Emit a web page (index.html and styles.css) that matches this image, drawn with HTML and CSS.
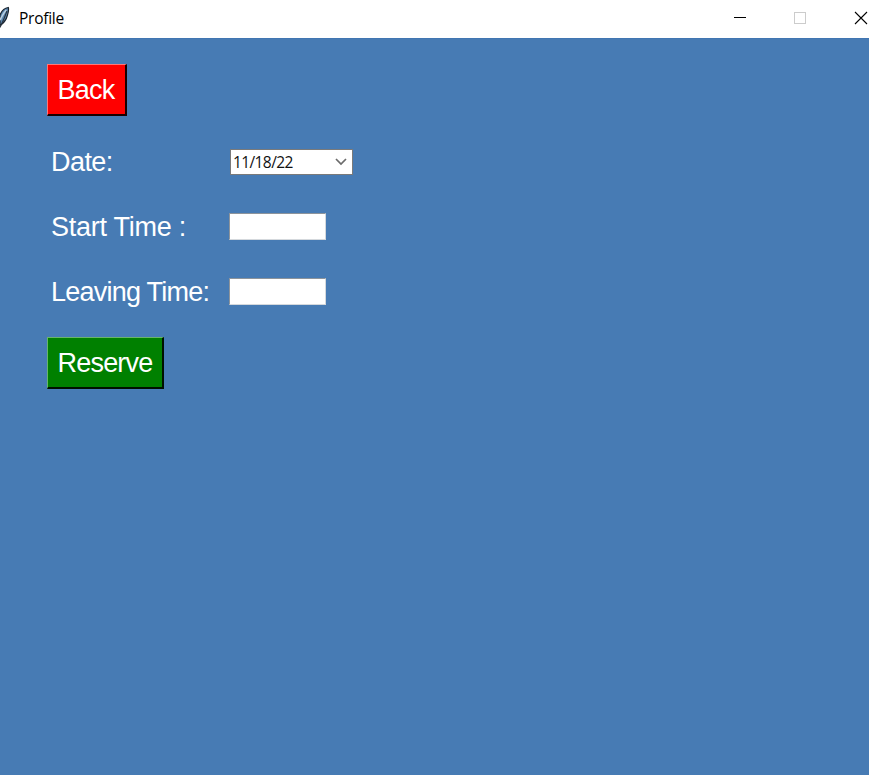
FILE: index.html
```html
<!DOCTYPE html>
<html lang="en">
<head>
<meta charset="utf-8">
<title>Profile</title>
<link rel="stylesheet" href="styles.css">
</head>
<body>
<header class="titlebar">
  <svg class="feather" width="10" height="24" viewBox="0 0 10 24">
    <path d="M8.3 1.5C5 2 1.5 5 0 9V19.5C4 17 6.5 13 7.5 9C8.5 6 8.8 3.5 8.3 1.5Z" fill="#5b87b0" stroke="#1b242e" stroke-width="1.2"/>
    <path d="M6.3 4C4 6.5 2 10 0 14" fill="none" stroke="#b9cfe0" stroke-width="1.7"/>
    <path d="M7 5C5 10.5 3 15.5 0 21.5" fill="none" stroke="#27323e" stroke-width="1.1"/>
  </svg>
  <span class="title">Profile</span>
  <svg class="controls" width="136" height="14" viewBox="0 0 136 14" fill="none" shape-rendering="crispEdges">
    <path d="M1 6.5H13" stroke="#000"/>
    <rect x="61.5" y="1.5" width="11" height="11" stroke="#ccc"/>
    <path d="M122 1L134 13M134 1L122 13" stroke="#000" stroke-width="1.1" shape-rendering="auto"/>
  </svg>
</header>
<main class="panel">
  <button class="btn back">Back</button>
  <form class="fields">
    <label for="date">Date:</label>
    <div class="combo" id="date"><span class="value">11/18/22</span>
      <svg width="12" height="8" viewBox="0 0 12 8"><path d="M1 1L6 6L11 1" fill="none" stroke="#6b6b6b" stroke-width="1.7"/></svg>
    </div>
    <label class="start-label" for="start">Start Time :</label>
    <input class="entry" id="start" type="text">
    <label class="leave-label" for="leave">Leaving Time:</label>
    <input class="entry" id="leave" type="text">
  </form>
  <button class="btn reserve">Reserve</button>
</main>
</body>
</html>
```
FILE: styles.css
```css
* { box-sizing: border-box; }
body {
  margin: 0;
  height: 775px;
  display: flex;
  flex-direction: column;
  overflow: hidden;
  font-family: "Liberation Sans", Arial, sans-serif;
}
.titlebar {
  height: 38px;
  flex: none;
  display: flex;
  align-items: center;
  padding-bottom: 2px;
  background: #fff;
}
.feather { margin: 0 9px 0 0; }
.title {
  font: 15.5px/20px "Open Sans", sans-serif;
  letter-spacing: -0.25px;
  color: #000;
}
.controls { margin-left: auto; }
.panel {
  flex: 1;
  padding: 25px 0 0 47px;
  background: #477bb4;
  border-top: 1px solid #4176b2;
  display: flex;
  flex-direction: column;
  align-items: flex-start;
}
.btn {
  height: 52px;
  padding: 1px 0 0;
  color: #fff;
  font: 27px/48px "Liberation Sans", Arial, sans-serif;
  letter-spacing: -0.8px;
  border-style: solid;
  border-width: 1px 2px 2px 1px;
}
.back {
  width: 80px;
  padding-right: 1px;
  background: #f00;
  border-color: #ff7777 #190000 #190000 #ff7777;
}
.reserve {
  width: 117px;
  background: #008000;
  border-color: #68b568 #001000 #001000 #68b568;
}
.fields {
  margin: 13px 0 13px 4px;
  display: grid;
  grid-template-columns: 178px auto;
  grid-template-rows: 65px 65px 65px;
  align-items: center;
  justify-items: start;
}
.fields label {
  padding-top: 1px;
  color: #fff;
  font-size: 27px;
  line-height: 30px;
  letter-spacing: -0.55px;
  white-space: nowrap;
}
.fields .start-label { letter-spacing: -0.25px; }
.fields .leave-label { letter-spacing: -0.75px; }
.combo {
  width: 123px;
  height: 26px;
  margin-top: 1px;
  display: flex;
  align-items: center;
  justify-content: space-between;
  margin-left: 1px;
  padding: 0 5px 0 2px;
  background: #fff;
  border: 1px solid #7a7a7a;
}
.value {
  font: 15.5px/20px "Open Sans", sans-serif;
  letter-spacing: -0.6px;
  color: #111;
}
.entry {
  width: 97px;
  height: 27px;
  padding: 0;
  background: #fff;
  border: 1px solid;
  border-color: #8d949b #d5d9dd #d5d9dd #8d949b;
  border-radius: 0;
}
```
